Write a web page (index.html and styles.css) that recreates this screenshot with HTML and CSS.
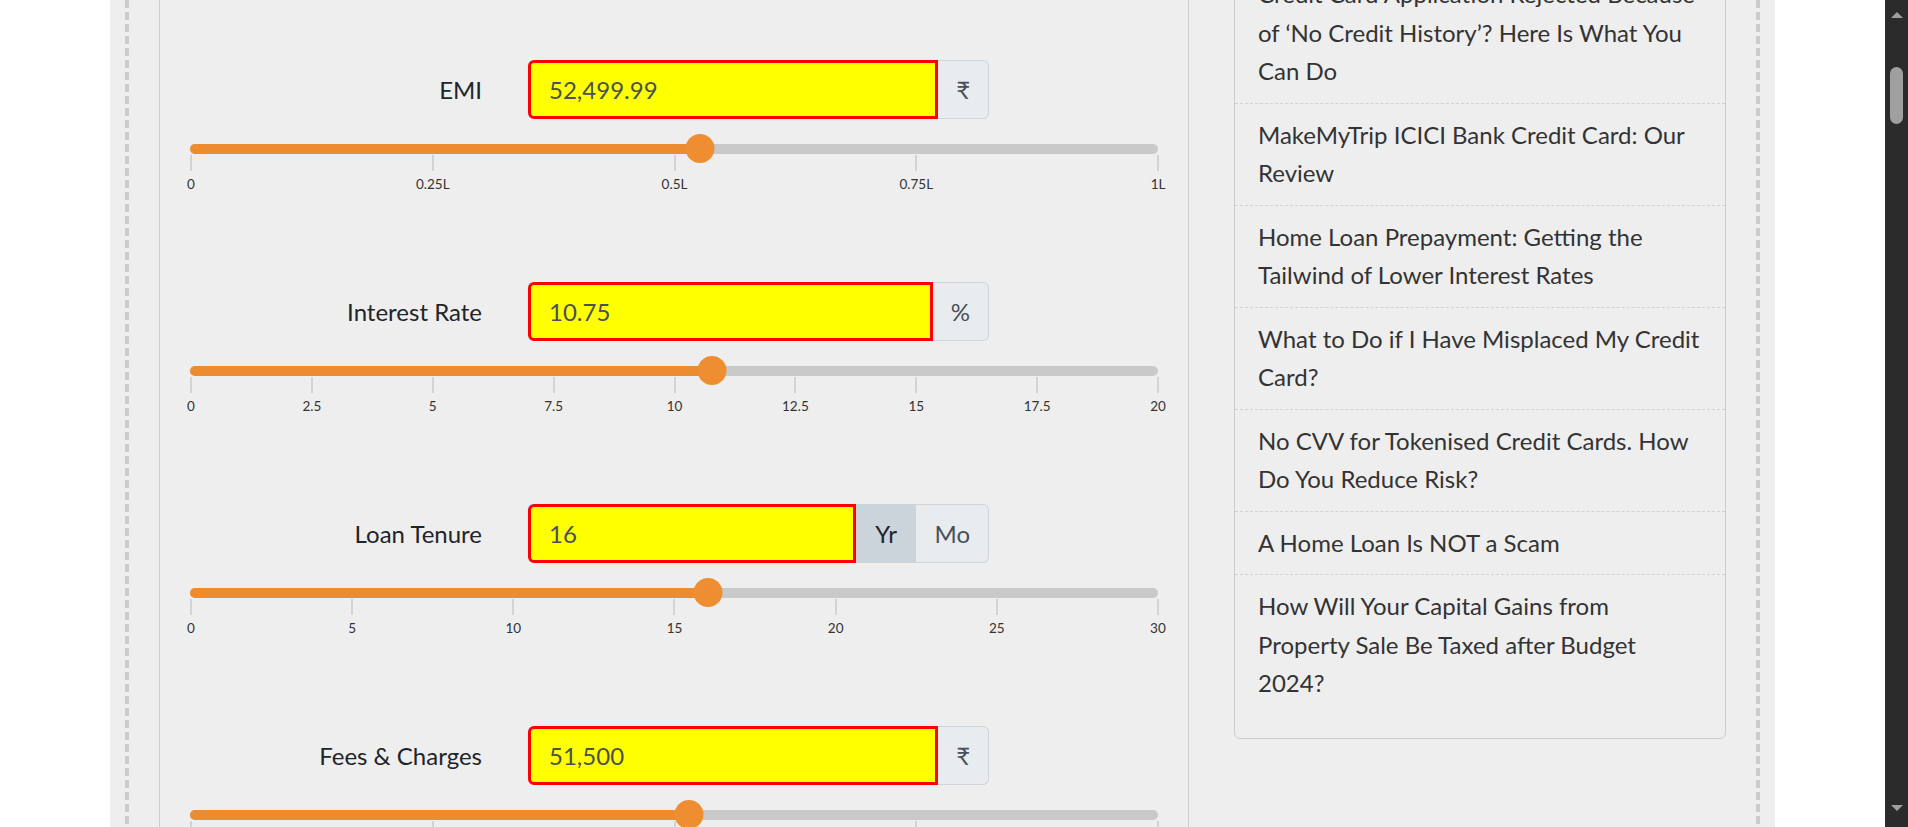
FILE: index.html
```html
<!DOCTYPE html>
<html lang="en">
<head>
<meta charset="utf-8">
<title>EMI Calculator</title>
<link rel="stylesheet" href="styles.css">
</head>
<body>
<div class="screen">
  <div class="main">
    <div class="container">
      <div class="frame">
        <div class="content">
          <section class="calc">
            <div class="field">
              <div class="field-top">
                <label class="field-label">EMI</label>
                <div class="input-group">
                  <div class="input">52,499.99</div>
                  <span class="addon">₹</span>
                </div>
              </div>
              <div class="slider">
                <div class="fill" style="width:52.7%"></div>
                <span class="thumb" style="left:52.7%"></span>
              </div>
              <div class="scale">
                <div class="tick"><span>0</span></div>
                <div class="tick"><span>0.25L</span></div>
                <div class="tick"><span>0.5L</span></div>
                <div class="tick"><span>0.75L</span></div>
                <div class="tick"><span>1L</span></div>
              </div>
            </div>

            <div class="field">
              <div class="field-top">
                <label class="field-label">Interest Rate</label>
                <div class="input-group">
                  <div class="input">10.75</div>
                  <span class="addon">%</span>
                </div>
              </div>
              <div class="slider">
                <div class="fill" style="width:53.9%"></div>
                <span class="thumb" style="left:53.9%"></span>
              </div>
              <div class="scale">
                <div class="tick"><span>0</span></div>
                <div class="tick"><span>2.5</span></div>
                <div class="tick"><span>5</span></div>
                <div class="tick"><span>7.5</span></div>
                <div class="tick"><span>10</span></div>
                <div class="tick"><span>12.5</span></div>
                <div class="tick"><span>15</span></div>
                <div class="tick"><span>17.5</span></div>
                <div class="tick"><span>20</span></div>
              </div>
            </div>

            <div class="field">
              <div class="field-top">
                <label class="field-label">Loan Tenure</label>
                <div class="input-group">
                  <div class="input">16</div>
                  <span class="addon addon-active">Yr</span>
                  <span class="addon">Mo</span>
                </div>
              </div>
              <div class="slider">
                <div class="fill" style="width:53.5%"></div>
                <span class="thumb" style="left:53.5%"></span>
              </div>
              <div class="scale">
                <div class="tick"><span>0</span></div>
                <div class="tick"><span>5</span></div>
                <div class="tick"><span>10</span></div>
                <div class="tick"><span>15</span></div>
                <div class="tick"><span>20</span></div>
                <div class="tick"><span>25</span></div>
                <div class="tick"><span>30</span></div>
              </div>
            </div>

            <div class="field">
              <div class="field-top">
                <label class="field-label">Fees &amp; Charges</label>
                <div class="input-group">
                  <div class="input">51,500</div>
                  <span class="addon">₹</span>
                </div>
              </div>
              <div class="slider">
                <div class="fill" style="width:51.5%"></div>
                <span class="thumb" style="left:51.5%"></span>
              </div>
              <div class="scale">
                <div class="tick"><span>0</span></div>
                <div class="tick"><span>0.25L</span></div>
                <div class="tick"><span>0.5L</span></div>
                <div class="tick"><span>0.75L</span></div>
                <div class="tick"><span>1L</span></div>
              </div>
            </div>
          </section>

          <aside class="sidebar">
            <ul class="posts">
              <li class="post">Credit Card Application Rejected Because of ‘No Credit History’? Here Is What You Can Do</li>
              <li class="post">MakeMyTrip ICICI Bank Credit Card: Our Review</li>
              <li class="post">Home Loan Prepayment: Getting the Tailwind of Lower Interest Rates</li>
              <li class="post">What to Do if I Have Misplaced My Credit Card?</li>
              <li class="post">No CVV for Tokenised Credit Cards. How Do You Reduce Risk?</li>
              <li class="post">A Home Loan Is NOT a Scam</li>
              <li class="post">How Will Your Capital Gains from<br>Property Sale Be Taxed after Budget<br>2024?</li>
            </ul>
          </aside>
        </div>
      </div>
    </div>
  </div>
  <div class="scrollbar">
    <span class="sb-up"></span>
    <span class="sb-thumb"></span>
    <span class="sb-down"></span>
  </div>
</div>
</body>
</html>
```
FILE: styles.css
```css
html, body {
  margin: 0;
  padding: 0;
  background: #fff;
  overflow: hidden;
}

body {
  font-family: "Lato", "DejaVu Sans", sans-serif;
  color: #212529;
}

.screen {
  display: flex;
  height: 827px;
  overflow: hidden;
}

.main {
  flex: 1;
  display: flex;
  justify-content: center;
  overflow: hidden;
}

.container {
  width: 1665px;
  flex: none;
  box-sizing: border-box;
  background: #eeeeee;
  padding: 0 15px;
}

.frame {
  display: flow-root;
  height: 100%;
  box-sizing: border-box;
  padding: 0 4px;
  overflow: hidden;
  background:
    repeating-linear-gradient(to bottom, #cccccc 0 8px, transparent 8px 12px) left top / 4px 100% no-repeat,
    repeating-linear-gradient(to bottom, #cccccc 0 8px, transparent 8px 12px) right top / 4px 100% no-repeat;
}

.content {
  display: flex;
  align-items: flex-start;
  gap: 45px;
  padding: 0 30px;
  margin-top: -60px;
}

/* Calculator */
.calc {
  width: 1030px;
  flex: none;
  box-sizing: border-box;
  border: 1px solid #cccccc;
  padding: 119px 30px 0;
  min-height: 1000px;
}

.field {
  margin-bottom: 90px;
}

.field-top {
  display: grid;
  grid-template-columns: 292px 461px;
  column-gap: 46px;
  align-items: center;
  height: 59px;
}

.field-label {
  text-align: right;
  font-size: 24px;
  color: #212529;
}

.input-group {
  display: flex;
  height: 59px;
}

.input {
  flex: 1;
  box-sizing: border-box;
  background: #ffff00;
  border: 3px solid #ff0000;
  border-radius: 6px 0 0 6px;
  padding-left: 18px;
  display: flex;
  align-items: center;
  font-size: 24px;
  color: #495057;
}

.addon {
  display: flex;
  align-items: center;
  justify-content: center;
  padding: 0 18px;
  background: #e9ecef;
  border: 1.5px solid #ced4da;
  border-left: none;
  font-size: 24px;
  color: #495057;
}

.addon:last-child {
  border-radius: 0 6px 6px 0;
}

.addon-active {
  padding: 0 19.5px;
  background: #cbd3db;
  color: #212529;
  border-right: none;
}

.slider {
  position: relative;
  margin-top: 25px;
  height: 10px;
  border-radius: 5px;
  background: #c9c9c9;
}

.fill {
  height: 100%;
  border-radius: 5px 0 0 5px;
  background: #ed8c2e;
}

.thumb {
  position: absolute;
  top: 50%;
  width: 29px;
  height: 29px;
  border-radius: 50%;
  background: #ee8e30;
  transform: translate(-50%, -52%);
}

.scale {
  display: flex;
  justify-content: space-between;
  margin-top: 1px;
  padding-left: 1px;
}

.tick {
  width: 0;
  display: flex;
  flex-direction: column;
  align-items: center;
}

.tick::before {
  content: "";
  display: block;
  width: 2px;
  height: 16px;
  background: #d3d3d3;
  flex: none;
}

.tick span {
  margin-top: 5px;
  font-size: 13.5px;
  line-height: 16px;
  white-space: nowrap;
  color: #333333;
}

/* Sidebar */
.sidebar {
  width: 492px;
  flex: none;
  box-sizing: border-box;
  border: 1px solid #cccccc;
  border-radius: 6px;
  padding: 22px 0 23px;
}

.posts {
  list-style: none;
  margin: 0;
  padding: 0;
}

.post {
  padding: 12px 23px;
  font-size: 24px;
  line-height: 38.5px;
  color: #333333;
  border-bottom: 1px dashed #d2d2d2;
}

.post:last-child {
  border-bottom: none;
}

/* Fake window scrollbar */
.scrollbar {
  width: 23px;
  flex: none;
  background: #2b2b2b;
  display: flex;
  flex-direction: column;
  align-items: center;
}

.sb-up {
  margin-top: 12px;
  width: 0;
  height: 0;
  border-left: 6px solid transparent;
  border-right: 6px solid transparent;
  border-bottom: 6px solid #9f9f9f;
}

.sb-thumb {
  margin-top: 49px;
  width: 13px;
  height: 57px;
  border-radius: 7px;
  background: #9f9f9f;
}

.sb-down {
  margin-top: auto;
  margin-bottom: 16px;
  width: 0;
  height: 0;
  border-left: 6px solid transparent;
  border-right: 6px solid transparent;
  border-top: 6px solid #9f9f9f;
}
```
